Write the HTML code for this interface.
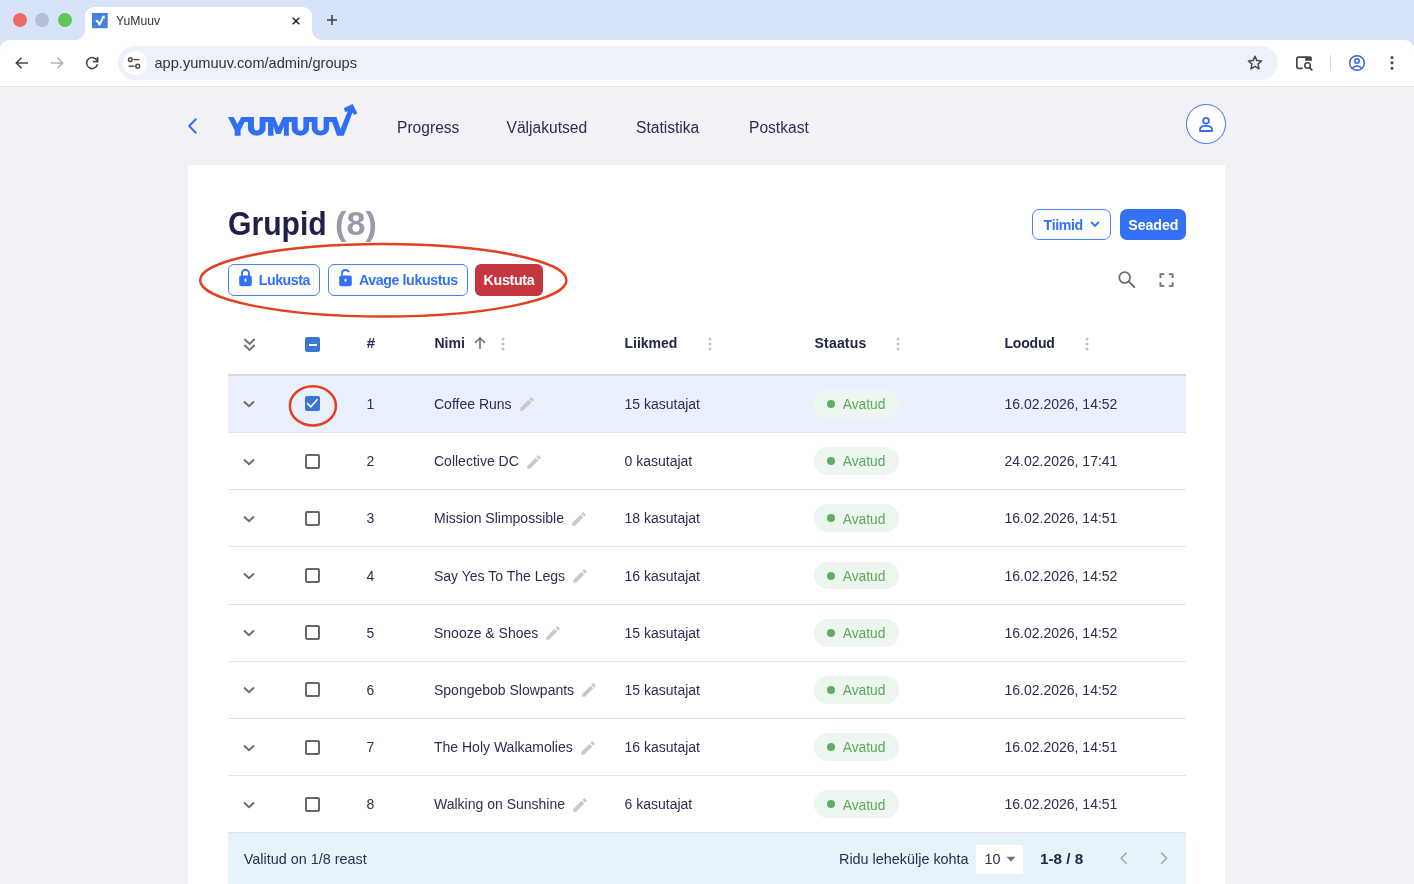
<!DOCTYPE html>
<html><head><meta charset="utf-8">
<style>
*{box-sizing:border-box;margin:0;padding:0}
html,body{width:1414px;height:884px;overflow:hidden;background:#f1f1f6;font-family:"Liberation Sans",sans-serif;position:relative}
.a{position:absolute}
.t{position:absolute;white-space:nowrap;line-height:1}
#tabstrip{left:0;top:0;width:1414px;height:50px;background:#d7e3f8}
#toolbar{left:0;top:40px;width:1414px;height:46px;background:#fff;border-radius:9px 9px 0 0}
#sep{left:0;top:85.6px;width:1414px;height:1.4px;background:#e6e6e9}
.dot{position:absolute;width:14px;height:14px;border-radius:50%}
#tab{left:85px;top:7px;width:227px;height:34px;background:#fff;border-radius:9px 9px 0 0}
#omni{left:118px;top:46.2px;width:1160px;height:33.5px;background:#edf2fa;border-radius:17px}
#card{left:188px;top:165px;width:1037px;height:730px;background:#fff}
.btn{position:absolute;height:31.6px;border-radius:6px;border:1px solid #4a82f4;background:#fff}
.hd{position:absolute;font-weight:700;font-size:14px;color:#23264a;white-space:nowrap;line-height:1}
.cell{position:absolute;font-size:14px;color:#2b2e52;white-space:nowrap;line-height:1}
.row{position:absolute;left:228px;width:958px;height:57.31px;border-bottom:1px solid #e3e3e6}
</style></head><body>
<div id="wrap" style="position:absolute;left:0;top:0;width:1414px;height:884px;overflow:hidden;will-change:transform">
<!-- browser chrome -->
<div id="tabstrip" class="a"></div>
<div class="dot" style="left:12.7px;top:13px;background:#ee6a62"></div>
<div class="dot" style="left:35px;top:13px;background:#b4bfd6"></div>
<div class="dot" style="left:58px;top:13px;background:#62c554"></div>
<div id="tab" class="a"></div>
<div id="toolbar" class="a"></div>
<div id="sep" class="a"></div>
<div id="omni" class="a"></div>
<div id="card" class="a"></div>

<!-- tab flares -->
<div class="a" style="left:75px;top:30px;width:10px;height:10px;background:radial-gradient(circle at 0 0,#d7e3f8 9.5px,#fff 10.5px)"></div>
<div class="a" style="left:312px;top:30px;width:10px;height:10px;background:radial-gradient(circle at 100% 0,#d7e3f8 9.5px,#fff 10.5px)"></div>
<!-- favicon -->
<svg class="a" style="left:92px;top:13px" width="16" height="16" viewBox="0 0 16 16">
<rect width="15.7" height="15.2" fill="#4481e2"/>
<path d="M4.5 7.7 Q6.5 8.5 7.6 11.6 L11 4.6" fill="none" stroke="#fff" stroke-width="2" stroke-linejoin="round" stroke-linecap="round"/>
<path d="M12.2 2.3 L9 4.2 L13 5.8 Z" fill="#fff"/>
</svg>
<div class="t" style="left:116px;top:15.1px;font-size:12.2px;color:#333">YuMuuv</div>
<svg class="a" style="left:290px;top:15px" width="12" height="12" viewBox="0 0 12 12"><path d="M2.7 2.7 L9.3 9.3 M9.3 2.7 L2.7 9.3" stroke="#222" stroke-width="1.5"/></svg>
<svg class="a" style="left:326px;top:14px" width="12" height="12" viewBox="0 0 12 12"><path d="M6 1 V11 M1 6 H11" stroke="#3c3c3c" stroke-width="1.5"/></svg>
<!-- nav icons -->
<svg class="a" style="left:13px;top:54px" width="18" height="18" viewBox="0 0 18 18"><path d="M15 9 H3.5 M8.5 3.8 L3.3 9 L8.5 14.2" fill="none" stroke="#474747" stroke-width="1.6"/></svg>
<svg class="a" style="left:48px;top:54px" width="18" height="18" viewBox="0 0 18 18"><path d="M3 9 H14.5 M9.5 3.8 L14.7 9 L9.5 14.2" fill="none" stroke="#b4b4b4" stroke-width="1.6"/></svg>
<svg class="a" style="left:83px;top:54px" width="18" height="18" viewBox="0 0 18 18"><path d="M14.5 10.3 A5.5 5.5 0 1 1 14.2 6.9" fill="none" stroke="#474747" stroke-width="1.6"/><path d="M14.6 3 V7.6 H10" fill="none" stroke="#474747" stroke-width="1.7"/></svg>
<div class="a" style="left:122.5px;top:51px;width:24px;height:24px;border-radius:50%;background:#fff"></div>
<svg class="a" style="left:126px;top:55px" width="16" height="16" viewBox="0 0 16 16"><circle cx="4.3" cy="4.6" r="1.9" fill="none" stroke="#474747" stroke-width="1.4"/><path d="M7.5 4.6 H13.5" stroke="#474747" stroke-width="1.4"/><circle cx="11.7" cy="11.2" r="1.9" fill="none" stroke="#474747" stroke-width="1.4"/><path d="M2.5 11.2 H8.5" stroke="#474747" stroke-width="1.4"/></svg>
<div class="t" style="left:154.5px;top:55.8px;font-size:14.6px;color:#333">app.yumuuv.com/admin/groups</div>
<!-- right icons -->
<svg class="a" style="left:1246px;top:54px" width="18" height="18" viewBox="0 0 18 18"><path d="M9 2.2 L10.9 6.6 L15.6 7 L12 10.1 L13.1 14.8 L9 12.3 L4.9 14.8 L6 10.1 L2.4 7 L7.1 6.6 Z" fill="none" stroke="#474747" stroke-width="1.5" stroke-linejoin="round"/></svg>
<svg class="a" style="left:1294px;top:54px" width="20" height="18" viewBox="0 0 20 18"><path d="M8 14.35 H4.6 Q2.85 14.35 2.85 12.6 V4.8 Q2.85 3.05 4.6 3.05 H12" fill="none" stroke="#474747" stroke-width="1.7" stroke-linecap="round"/><path d="M11.2 2.2 H16.2 Q17.9 2.2 17.9 3.9 V6.8 H11.2 Z" fill="#474747"/><circle cx="13.55" cy="11.57" r="2.75" fill="none" stroke="#474747" stroke-width="1.6"/><path d="M15.6 13.6 L17.8 15.8" stroke="#474747" stroke-width="1.8" stroke-linecap="round"/></svg>
<div class="a" style="left:1329.5px;top:55px;width:1.2px;height:16px;background:#c9d9f5"></div>
<svg class="a" style="left:1348px;top:54px" width="18" height="18" viewBox="0 0 18 18"><circle cx="9" cy="9" r="7.3" fill="none" stroke="#3a62d0" stroke-width="1.5"/><circle cx="9" cy="7" r="2.2" fill="none" stroke="#3a62d0" stroke-width="1.5"/><path d="M4.6 13.9 Q9 10 13.4 13.9" fill="none" stroke="#3a62d0" stroke-width="1.5"/></svg>
<svg class="a" style="left:1386px;top:54px" width="12" height="18" viewBox="0 0 12 18"><circle cx="6" cy="3.6" r="1.5" fill="#474747"/><circle cx="6" cy="8.7" r="1.5" fill="#474747"/><circle cx="6" cy="14.2" r="1.5" fill="#474747"/></svg>


<!-- page header -->
<svg class="a" style="left:0;top:0" width="1414" height="160" viewBox="0 0 1414 160">
<path d="M195.8 119.3 L189.2 126 L195.8 132.7" fill="none" stroke="#3a6ff0" stroke-width="2" stroke-linecap="round" stroke-linejoin="round"/>
<path d="M 227.96 117.08 L 233.65 117.08 L 237.37 124.26 L 241.33 117.08 L 253.95 117.08 L 253.95 127.84 A 2.85 2.85 0 0 0 259.64 127.84 L 259.64 117.08 L 274.5 117.08 L 278.46 126.98 L 283.16 117.08 L 297.67 117.08 L 297.67 127.84 A 2.85 2.85 0 0 0 303.37 127.84 L 303.37 117.08 L 317.48 117.08 L 317.48 127.84 A 3.09 2.85 0 0 0 323.66 127.84 L 323.66 117.08 L 336.53 117.08 L 340.5 129.2 L 347.67 111.14 L 345.2 111.9 L 343.71 108.17 L 352.62 103.96 L 357.33 113.37 L 354.36 114.85 L 352.38 112.87 L 343.71 135.64 L 337.03 135.64 L 332.08 122.03 L 329.11 122.03 L 329.11 128.7 A 8.67 6.94 0 0 1 311.78 128.7 L 311.78 122.03 L 309.06 122.03 L 309.06 128.7 A 8.64 6.94 0 0 1 291.73 128.7 L 291.73 122.03 L 288.85 122.03 L 288.85 135.64 L 283.9 135.64 L 283.9 126.24 L 280.68 133.9 L 275.98 133.9 L 273.5 126.24 L 273.5 135.64 L 268.06 135.64 L 268.06 122.03 L 265.58 122.03 L 265.58 128.7 A 8.78 6.94 0 0 1 248.01 128.7 L 248.01 122.03 L 244.55 122.03 L 240.58 130.2 L 240.58 135.64 L 234.64 135.64 L 234.64 130.2 Z" fill="#306ef5"/>
</svg>
<div class="t" style="left:397px;top:120px;font-size:15.6px;color:#2a2d54">Progress</div>
<div class="t" style="left:506.5px;top:120px;font-size:15.6px;color:#2a2d54">Väljakutsed</div>
<div class="t" style="left:636px;top:120px;font-size:15.6px;color:#2a2d54">Statistika</div>
<div class="t" style="left:749px;top:120px;font-size:15.6px;color:#2a2d54">Postkast</div>
<div class="a" style="left:1186px;top:104px;width:39.5px;height:39.5px;border-radius:50%;border:1px solid #3a6ff0;background:#fff"></div>
<svg class="a" style="left:1196px;top:114px" width="20" height="20" viewBox="0 0 20 20"><circle cx="10" cy="6.8" r="2.9" fill="none" stroke="#306ef5" stroke-width="1.8"/><path d="M4 17 V15.5 Q4 11.8 10 11.8 Q16 11.8 16 15.5 V17 Z" fill="none" stroke="#306ef5" stroke-width="1.8" stroke-linejoin="round"/></svg>

<!-- card top -->
<div class="t" style="left:228px;top:206.6px;font-size:33px;font-weight:700;color:#1f2247;transform:scaleX(0.913);transform-origin:0 0">Grupid</div>
<div class="t" style="left:335px;top:206.6px;font-size:33.5px;font-weight:700;color:#9899ab;transform:scaleX(1.02);transform-origin:0 0">(8)</div>
<div class="btn" style="left:228px;top:264px;width:91.5px"></div>
<svg class="a" style="left:238px;top:268px" width="15" height="19" viewBox="0 0 15 19"><path d="M4 8 V5.3 A3.5 3.5 0 0 1 11 5.3 V8" fill="none" stroke="#3370f4" stroke-width="1.9"/><rect x="1.2" y="7.4" width="12.6" height="10.8" rx="2.2" fill="#3370f4"/><rect x="6.6" y="10.5" width="1.8" height="3.3" rx=".9" fill="#fff"/></svg>
<div class="t" style="left:258.7px;top:273px;font-size:14.2px;font-weight:700;color:#3370f4;letter-spacing:-0.43px">Lukusta</div>
<div class="btn" style="left:328px;top:264px;width:139.5px"></div>
<svg class="a" style="left:338px;top:268px" width="15" height="19" viewBox="0 0 15 19"><path d="M4 7.6 V5.3 A3.5 3.5 0 0 1 10.8 4.3" fill="none" stroke="#3370f4" stroke-width="1.9"/><rect x="1.2" y="7.4" width="12.6" height="10.8" rx="2.2" fill="#3370f4"/><rect x="6.6" y="10.5" width="1.8" height="3.3" rx=".9" fill="#fff"/></svg>
<div class="t" style="left:358.9px;top:273px;font-size:14.2px;font-weight:700;color:#3370f4;letter-spacing:-0.39px">Avage lukustus</div>
<div class="a" style="left:475px;top:264px;width:67.5px;height:31.6px;border-radius:6px;background:#c5363f"></div>
<div class="t" style="left:483.6px;top:273px;font-size:14.2px;font-weight:700;color:#fff;letter-spacing:-0.3px">Kustuta</div>
<svg class="a" style="left:0;top:0" width="1414" height="884" viewBox="0 0 1414 884"><ellipse cx="383.3" cy="280.3" rx="183.2" ry="36.2" fill="none" stroke="#e2401f" stroke-width="2.5"/></svg>
<div class="btn" style="left:1032px;top:208.6px;width:78.5px;height:31.2px;border-radius:7px"></div>
<div class="t" style="left:1043.6px;top:217.6px;font-size:14.2px;font-weight:700;color:#3370f4;letter-spacing:-0.37px">Tiimid</div>
<svg class="a" style="left:1089px;top:219px" width="12" height="10" viewBox="0 0 12 10"><path d="M2.2 3 L6 6.8 L9.8 3" fill="none" stroke="#3370f4" stroke-width="1.9"/></svg>
<div class="a" style="left:1120.2px;top:208.6px;width:66px;height:31.2px;border-radius:7px;background:#3370f4"></div>
<div class="t" style="left:1128.3px;top:217.6px;font-size:14.2px;font-weight:700;color:#fff;letter-spacing:-0.08px">Seaded</div>
<svg class="a" style="left:1116px;top:269px" width="22" height="22" viewBox="0 0 22 22"><circle cx="8.7" cy="8.5" r="5.4" fill="none" stroke="#707070" stroke-width="1.8"/><path d="M12.6 12.4 L18.3 18" stroke="#707070" stroke-width="2" stroke-linecap="round"/></svg>
<svg class="a" style="left:1159px;top:273px" width="15" height="15" viewBox="0 0 15 15"><path d="M1.45 5.1 V1.15 H5.2 M9.8 1.15 H13.65 V5.1 M13.65 9.2 V12.85 H9.8 M5.2 12.85 H1.45 V9.2" fill="none" stroke="#707070" stroke-width="1.9"/></svg>

<!-- table header -->
<svg class="a" style="left:240px;top:334px" width="18" height="20" viewBox="0 0 18 20"><path d="M4.3 5 L9.5 10 L14.7 5 M4.3 11 L9.5 16 L14.7 11" fill="none" stroke="#707070" stroke-width="1.9"/></svg>
<div class="a" style="left:305px;top:337px;width:15px;height:15px;border-radius:2px;background:#3b76d4"></div>
<div class="a" style="left:308.8px;top:343.6px;width:7.8px;height:2.2px;background:#fff"></div>
<div class="hd" style="left:366.8px;top:335.6px;font-size:14.8px">#</div>
<div class="hd" style="left:434.5px;top:336px">Nimi</div>
<svg class="a" style="left:472px;top:336px" width="16" height="14" viewBox="0 0 16 14"><path d="M8 13 V2.2 M3 7 L8 2 L13 7" fill="none" stroke="#757575" stroke-width="1.6"/></svg>
<svg class="a" style="left:500px;top:336.5px" width="6" height="14" viewBox="0 0 6 14"><circle cx="3" cy="2" r="1.5" fill="#c4c4c4"/><circle cx="3" cy="7" r="1.5" fill="#c4c4c4"/><circle cx="3" cy="12" r="1.5" fill="#c4c4c4"/></svg>
<div class="hd" style="left:624.5px;top:336px">Liikmed</div>
<svg class="a" style="left:706.5px;top:336.5px" width="6" height="14" viewBox="0 0 6 14"><circle cx="3" cy="2" r="1.5" fill="#c4c4c4"/><circle cx="3" cy="7" r="1.5" fill="#c4c4c4"/><circle cx="3" cy="12" r="1.5" fill="#c4c4c4"/></svg>
<div class="hd" style="left:814.5px;top:336px;letter-spacing:0.2px">Staatus</div>
<svg class="a" style="left:895px;top:336.5px" width="6" height="14" viewBox="0 0 6 14"><circle cx="3" cy="2" r="1.5" fill="#c4c4c4"/><circle cx="3" cy="7" r="1.5" fill="#c4c4c4"/><circle cx="3" cy="12" r="1.5" fill="#c4c4c4"/></svg>
<div class="hd" style="left:1004.5px;top:336px;letter-spacing:-0.2px">Loodud</div>
<svg class="a" style="left:1083.5px;top:336.5px" width="6" height="14" viewBox="0 0 6 14"><circle cx="3" cy="2" r="1.5" fill="#c4c4c4"/><circle cx="3" cy="7" r="1.5" fill="#c4c4c4"/><circle cx="3" cy="12" r="1.5" fill="#c4c4c4"/></svg>
<div class="a" style="left:228px;top:374px;width:958px;height:1.5px;background:#dadade"></div>
<div class="a" style="left:228px;top:375.80px;width:958px;height:57.2px;background:#e9effc;border-bottom:1px solid #e2e2e6"></div>
<svg class="a" style="left:240px;top:396.40px" width="18" height="16" viewBox="0 0 18 16"><path d="M4 5.5 L9 10.3 L14 5.5" fill="none" stroke="#6b6b6b" stroke-width="1.9"/></svg>
<div class="a" style="left:305px;top:396.40px;width:15px;height:15px;border-radius:2px;background:#3b76d4"></div>
<svg class="a" style="left:305px;top:396.40px" width="15" height="15" viewBox="0 0 15 15"><path d="M2.2 7.3 L5.8 10.8 L12.5 3.3" fill="none" stroke="#fff" stroke-width="1.6"/></svg>
<div class="cell" style="left:366.5px;top:397.00px">1</div>
<div class="cell" style="left:434px;top:397.00px">Coffee Runs<svg style="position:absolute;left:100%;margin-left:6px;top:-1.7px" width="18" height="18" viewBox="0 0 24 24"><path d="M3 17.25V21h3.75L17.81 9.94l-3.75-3.75L3 17.25zM20.71 7.04c.39-.39.39-1.02 0-1.41l-2.34-2.34c-.39-.39-1.02-.39-1.410 0l-1.83 1.83 3.75 3.75 1.83-1.83z" fill="#c9c9c9"/></svg></div>
<div class="cell" style="left:624.5px;top:397.00px">15 kasutajat</div>
<div class="a" style="left:814px;top:390.05px;width:84.5px;height:27.7px;border-radius:14px;background:#edf6ee"></div>
<div class="a" style="left:826.8px;top:399.90px;width:8px;height:8px;border-radius:50%;background:#5fae62"></div>
<div class="cell" style="left:842.7px;top:398.10px;color:#5ca85f;font-size:13.8px">Avatud</div>
<div class="cell" style="left:1004.5px;top:397.00px">16.02.2026, 14:52</div>
<div class="a" style="left:228px;top:433.00px;width:958px;height:57.2px;background:#fff;border-bottom:1px solid #e2e2e6"></div>
<svg class="a" style="left:240px;top:453.60px" width="18" height="16" viewBox="0 0 18 16"><path d="M4 5.5 L9 10.3 L14 5.5" fill="none" stroke="#6b6b6b" stroke-width="1.9"/></svg>
<div class="a" style="left:305px;top:453.60px;width:15px;height:15px;border-radius:2px;border:2px solid #676767"></div>
<div class="cell" style="left:366.5px;top:454.20px">2</div>
<div class="cell" style="left:434px;top:454.20px">Collective DC<svg style="position:absolute;left:100%;margin-left:6px;top:-1.7px" width="18" height="18" viewBox="0 0 24 24"><path d="M3 17.25V21h3.75L17.81 9.94l-3.75-3.75L3 17.25zM20.71 7.04c.39-.39.39-1.02 0-1.41l-2.34-2.34c-.39-.39-1.02-.39-1.410 0l-1.83 1.83 3.75 3.75 1.83-1.83z" fill="#c9c9c9"/></svg></div>
<div class="cell" style="left:624.5px;top:454.20px">0 kasutajat</div>
<div class="a" style="left:814px;top:447.25px;width:84.5px;height:27.7px;border-radius:14px;background:#edf6ee"></div>
<div class="a" style="left:826.8px;top:457.10px;width:8px;height:8px;border-radius:50%;background:#5fae62"></div>
<div class="cell" style="left:842.7px;top:455.30px;color:#5ca85f;font-size:13.8px">Avatud</div>
<div class="cell" style="left:1004.5px;top:454.20px">24.02.2026, 17:41</div>
<div class="a" style="left:228px;top:490.20px;width:958px;height:57.2px;background:#fff;border-bottom:1px solid #e2e2e6"></div>
<svg class="a" style="left:240px;top:510.80px" width="18" height="16" viewBox="0 0 18 16"><path d="M4 5.5 L9 10.3 L14 5.5" fill="none" stroke="#6b6b6b" stroke-width="1.9"/></svg>
<div class="a" style="left:305px;top:510.80px;width:15px;height:15px;border-radius:2px;border:2px solid #676767"></div>
<div class="cell" style="left:366.5px;top:511.40px">3</div>
<div class="cell" style="left:434px;top:511.40px">Mission Slimpossible<svg style="position:absolute;left:100%;margin-left:6px;top:-1.7px" width="18" height="18" viewBox="0 0 24 24"><path d="M3 17.25V21h3.75L17.81 9.94l-3.75-3.75L3 17.25zM20.71 7.04c.39-.39.39-1.02 0-1.41l-2.34-2.34c-.39-.39-1.02-.39-1.410 0l-1.83 1.83 3.75 3.75 1.83-1.83z" fill="#c9c9c9"/></svg></div>
<div class="cell" style="left:624.5px;top:511.40px">18 kasutajat</div>
<div class="a" style="left:814px;top:504.45px;width:84.5px;height:27.7px;border-radius:14px;background:#edf6ee"></div>
<div class="a" style="left:826.8px;top:514.30px;width:8px;height:8px;border-radius:50%;background:#5fae62"></div>
<div class="cell" style="left:842.7px;top:512.50px;color:#5ca85f;font-size:13.8px">Avatud</div>
<div class="cell" style="left:1004.5px;top:511.40px">16.02.2026, 14:51</div>
<div class="a" style="left:228px;top:547.40px;width:958px;height:57.2px;background:#fff;border-bottom:1px solid #e2e2e6"></div>
<svg class="a" style="left:240px;top:568.00px" width="18" height="16" viewBox="0 0 18 16"><path d="M4 5.5 L9 10.3 L14 5.5" fill="none" stroke="#6b6b6b" stroke-width="1.9"/></svg>
<div class="a" style="left:305px;top:568.00px;width:15px;height:15px;border-radius:2px;border:2px solid #676767"></div>
<div class="cell" style="left:366.5px;top:568.60px">4</div>
<div class="cell" style="left:434px;top:568.60px">Say Yes To The Legs<svg style="position:absolute;left:100%;margin-left:6px;top:-1.7px" width="18" height="18" viewBox="0 0 24 24"><path d="M3 17.25V21h3.75L17.81 9.94l-3.75-3.75L3 17.25zM20.71 7.04c.39-.39.39-1.02 0-1.41l-2.34-2.34c-.39-.39-1.02-.39-1.410 0l-1.83 1.83 3.75 3.75 1.83-1.83z" fill="#c9c9c9"/></svg></div>
<div class="cell" style="left:624.5px;top:568.60px">16 kasutajat</div>
<div class="a" style="left:814px;top:561.65px;width:84.5px;height:27.7px;border-radius:14px;background:#edf6ee"></div>
<div class="a" style="left:826.8px;top:571.50px;width:8px;height:8px;border-radius:50%;background:#5fae62"></div>
<div class="cell" style="left:842.7px;top:569.70px;color:#5ca85f;font-size:13.8px">Avatud</div>
<div class="cell" style="left:1004.5px;top:568.60px">16.02.2026, 14:52</div>
<div class="a" style="left:228px;top:604.60px;width:958px;height:57.2px;background:#fff;border-bottom:1px solid #e2e2e6"></div>
<svg class="a" style="left:240px;top:625.20px" width="18" height="16" viewBox="0 0 18 16"><path d="M4 5.5 L9 10.3 L14 5.5" fill="none" stroke="#6b6b6b" stroke-width="1.9"/></svg>
<div class="a" style="left:305px;top:625.20px;width:15px;height:15px;border-radius:2px;border:2px solid #676767"></div>
<div class="cell" style="left:366.5px;top:625.80px">5</div>
<div class="cell" style="left:434px;top:625.80px">Snooze &amp; Shoes<svg style="position:absolute;left:100%;margin-left:6px;top:-1.7px" width="18" height="18" viewBox="0 0 24 24"><path d="M3 17.25V21h3.75L17.81 9.94l-3.75-3.75L3 17.25zM20.71 7.04c.39-.39.39-1.02 0-1.41l-2.34-2.34c-.39-.39-1.02-.39-1.410 0l-1.83 1.83 3.75 3.75 1.83-1.83z" fill="#c9c9c9"/></svg></div>
<div class="cell" style="left:624.5px;top:625.80px">15 kasutajat</div>
<div class="a" style="left:814px;top:618.85px;width:84.5px;height:27.7px;border-radius:14px;background:#edf6ee"></div>
<div class="a" style="left:826.8px;top:628.70px;width:8px;height:8px;border-radius:50%;background:#5fae62"></div>
<div class="cell" style="left:842.7px;top:626.90px;color:#5ca85f;font-size:13.8px">Avatud</div>
<div class="cell" style="left:1004.5px;top:625.80px">16.02.2026, 14:52</div>
<div class="a" style="left:228px;top:661.80px;width:958px;height:57.2px;background:#fff;border-bottom:1px solid #e2e2e6"></div>
<svg class="a" style="left:240px;top:682.40px" width="18" height="16" viewBox="0 0 18 16"><path d="M4 5.5 L9 10.3 L14 5.5" fill="none" stroke="#6b6b6b" stroke-width="1.9"/></svg>
<div class="a" style="left:305px;top:682.40px;width:15px;height:15px;border-radius:2px;border:2px solid #676767"></div>
<div class="cell" style="left:366.5px;top:683.00px">6</div>
<div class="cell" style="left:434px;top:683.00px">Spongebob Slowpants<svg style="position:absolute;left:100%;margin-left:6px;top:-1.7px" width="18" height="18" viewBox="0 0 24 24"><path d="M3 17.25V21h3.75L17.81 9.94l-3.75-3.75L3 17.25zM20.71 7.04c.39-.39.39-1.02 0-1.41l-2.34-2.34c-.39-.39-1.02-.39-1.410 0l-1.83 1.83 3.75 3.75 1.83-1.83z" fill="#c9c9c9"/></svg></div>
<div class="cell" style="left:624.5px;top:683.00px">15 kasutajat</div>
<div class="a" style="left:814px;top:676.05px;width:84.5px;height:27.7px;border-radius:14px;background:#edf6ee"></div>
<div class="a" style="left:826.8px;top:685.90px;width:8px;height:8px;border-radius:50%;background:#5fae62"></div>
<div class="cell" style="left:842.7px;top:684.10px;color:#5ca85f;font-size:13.8px">Avatud</div>
<div class="cell" style="left:1004.5px;top:683.00px">16.02.2026, 14:52</div>
<div class="a" style="left:228px;top:719.00px;width:958px;height:57.2px;background:#fff;border-bottom:1px solid #e2e2e6"></div>
<svg class="a" style="left:240px;top:739.60px" width="18" height="16" viewBox="0 0 18 16"><path d="M4 5.5 L9 10.3 L14 5.5" fill="none" stroke="#6b6b6b" stroke-width="1.9"/></svg>
<div class="a" style="left:305px;top:739.60px;width:15px;height:15px;border-radius:2px;border:2px solid #676767"></div>
<div class="cell" style="left:366.5px;top:740.20px">7</div>
<div class="cell" style="left:434px;top:740.20px">The Holy Walkamolies<svg style="position:absolute;left:100%;margin-left:6px;top:-1.7px" width="18" height="18" viewBox="0 0 24 24"><path d="M3 17.25V21h3.75L17.81 9.94l-3.75-3.75L3 17.25zM20.71 7.04c.39-.39.39-1.02 0-1.41l-2.34-2.34c-.39-.39-1.02-.39-1.410 0l-1.83 1.83 3.75 3.75 1.83-1.83z" fill="#c9c9c9"/></svg></div>
<div class="cell" style="left:624.5px;top:740.20px">16 kasutajat</div>
<div class="a" style="left:814px;top:733.25px;width:84.5px;height:27.7px;border-radius:14px;background:#edf6ee"></div>
<div class="a" style="left:826.8px;top:743.10px;width:8px;height:8px;border-radius:50%;background:#5fae62"></div>
<div class="cell" style="left:842.7px;top:741.30px;color:#5ca85f;font-size:13.8px">Avatud</div>
<div class="cell" style="left:1004.5px;top:740.20px">16.02.2026, 14:51</div>
<div class="a" style="left:228px;top:776.20px;width:958px;height:57.2px;background:#fff;border-bottom:1px solid #e2e2e6"></div>
<svg class="a" style="left:240px;top:796.80px" width="18" height="16" viewBox="0 0 18 16"><path d="M4 5.5 L9 10.3 L14 5.5" fill="none" stroke="#6b6b6b" stroke-width="1.9"/></svg>
<div class="a" style="left:305px;top:796.80px;width:15px;height:15px;border-radius:2px;border:2px solid #676767"></div>
<div class="cell" style="left:366.5px;top:797.40px">8</div>
<div class="cell" style="left:434px;top:797.40px">Walking on Sunshine<svg style="position:absolute;left:100%;margin-left:6px;top:-1.7px" width="18" height="18" viewBox="0 0 24 24"><path d="M3 17.25V21h3.75L17.81 9.94l-3.75-3.75L3 17.25zM20.71 7.04c.39-.39.39-1.02 0-1.41l-2.34-2.34c-.39-.39-1.02-.39-1.410 0l-1.83 1.83 3.75 3.75 1.83-1.83z" fill="#c9c9c9"/></svg></div>
<div class="cell" style="left:624.5px;top:797.40px">6 kasutajat</div>
<div class="a" style="left:814px;top:790.45px;width:84.5px;height:27.7px;border-radius:14px;background:#edf6ee"></div>
<div class="a" style="left:826.8px;top:800.30px;width:8px;height:8px;border-radius:50%;background:#5fae62"></div>
<div class="cell" style="left:842.7px;top:798.50px;color:#5ca85f;font-size:13.8px">Avatud</div>
<div class="cell" style="left:1004.5px;top:797.40px">16.02.2026, 14:51</div>
<svg class="a" style="left:0;top:0" width="1414" height="884" viewBox="0 0 1414 884"><ellipse cx="312.9" cy="405.9" rx="23" ry="19.6" fill="none" stroke="#e2401f" stroke-width="2.5"/></svg>

<div class="a" style="left:228px;top:833px;width:958px;height:60px;background:#e6f3fa"></div>
<div class="cell" style="left:243.8px;top:851.5px;font-size:14.4px">Valitud on 1/8 reast</div>
<div class="cell" style="left:839px;top:851.5px;font-size:14.4px">Ridu lehekülje kohta</div>
<div class="a" style="left:975.8px;top:845px;width:47px;height:28.6px;background:#fff"></div>
<div class="cell" style="left:984.5px;top:851.5px;font-size:14.4px">10</div>
<svg class="a" style="left:1005px;top:855px" width="12" height="8" viewBox="0 0 12 8"><path d="M1.5 1.7 H10.5 L6 6.7 Z" fill="#757575"/></svg>
<div class="cell" style="left:1040px;top:851px;font-size:15.3px;font-weight:700;color:#23264a">1-8 / 8</div>
<svg class="a" style="left:1116px;top:850px" width="16" height="16" viewBox="0 0 16 16"><path d="M10.6 2.6 L5.2 8.2 L10.6 13.8" fill="none" stroke="#a9a9a9" stroke-width="1.6"/></svg>
<svg class="a" style="left:1156px;top:850px" width="16" height="16" viewBox="0 0 16 16"><path d="M5.2 2.6 L10.6 8.2 L5.2 13.8" fill="none" stroke="#a9a9a9" stroke-width="1.6"/></svg>
</div>
</body></html>
